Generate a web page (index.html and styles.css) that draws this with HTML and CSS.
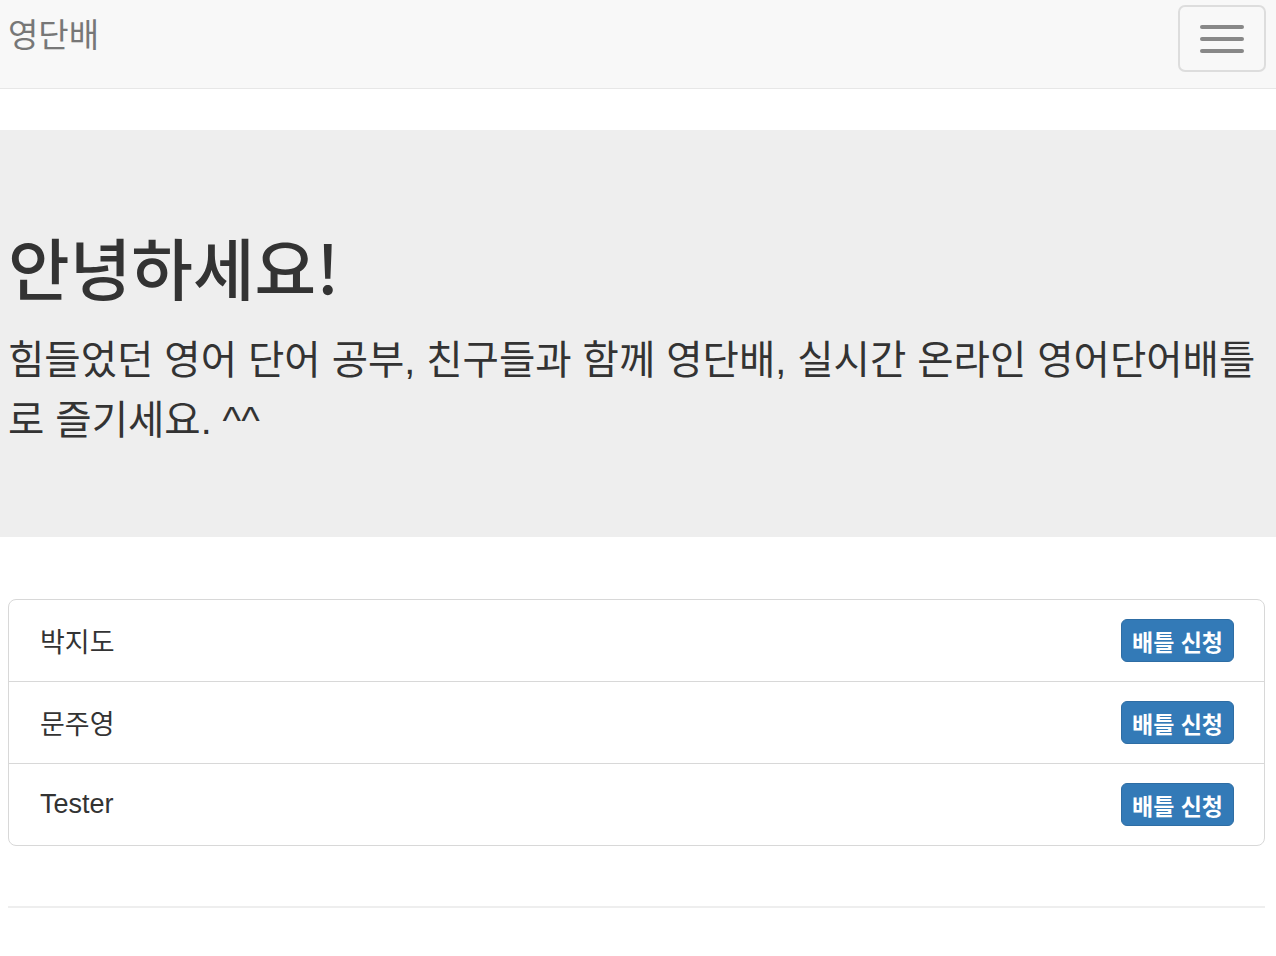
FILE: index.html
```html
<!DOCTYPE html>
<html lang="ko">
<head>
<meta charset="utf-8">
<title>영단배</title>
<link rel="stylesheet" href="styles.css">
</head>
<body>
<nav class="navbar">
  <a class="brand" href="#">영단배</a>
  <button class="toggle" type="button" aria-label="메뉴">
    <span class="bar"></span>
    <span class="bar"></span>
    <span class="bar"></span>
  </button>
</nav>

<section class="jumbotron">
  <h1 class="title">안녕하세요!</h1>
  <p class="lead">힘들었던 영어 단어 공부, 친구들과 함께 영단배, 실시간 온라인 영어단어배틀로 즐기세요. ^^</p>
</section>

<main class="content">
  <ul class="list">
    <li class="item"><span class="name">박지도</span><button class="btn" type="button">배틀 신청</button></li>
    <li class="item"><span class="name">문주영</span><button class="btn" type="button">배틀 신청</button></li>
    <li class="item"><span class="name">Tester</span><button class="btn" type="button">배틀 신청</button></li>
  </ul>
  <hr class="rule">
</main>
</body>
</html>
```

FILE: styles.css
```css
html, body {
  margin: 0;
  padding: 0;
  background: #fff;
}

body {
  font-family: "Liberation Sans", "Noto Sans CJK KR", sans-serif;
  color: #333;
}

.navbar {
  display: flex;
  justify-content: space-between;
  align-items: flex-start;
  height: 88px;
  background: #f8f8f8;
  border-bottom: 1px solid #e7e7e7;
}

.brand {
  display: block;
  padding: 16px 0 0 8px;
  font-size: 33px;
  line-height: 40px;
  color: #777;
  text-decoration: none;
}

.toggle {
  box-sizing: border-box;
  display: flex;
  flex-direction: column;
  align-items: center;
  justify-content: center;
  gap: 8px;
  width: 88px;
  height: 67px;
  margin: 5px 10px 0 0;
  padding: 0;
  background: transparent;
  border: 2px solid #ddd;
  border-radius: 7px;
}

.bar {
  display: block;
  width: 44px;
  height: 4px;
  border-radius: 2px;
  background: #888;
}

.jumbotron {
  margin-top: 41px;
  padding: 101px 4px 87px 8px;
  background: #eee;
}

.title {
  margin: 0;
  font-family: "Noto Sans CJK KR", sans-serif;
  font-size: 67px;
  line-height: 70px;
  font-weight: 500;
  color: #333;
}

.lead {
  margin: 29px 0 0;
  font-size: 39.5px;
  line-height: 60px;
  font-weight: 400;
  color: #333;
}

.content {
  padding: 62px 11px 0 8px;
}

.list {
  margin: 0;
  padding: 0;
  list-style: none;
  border: 1px solid #d8d8d8;
  border-radius: 8px;
}

.item {
  display: flex;
  justify-content: space-between;
  align-items: center;
  height: 81px;
  padding: 0 30px 0 31px;
  border-top: 1px solid #d8d8d8;
}

.item:first-child {
  border-top: none;
}

.name {
  font-size: 27px;
  color: #333;
}

.btn {
  box-sizing: border-box;
  height: 43px;
  padding: 0 10px;
  font-family: "Liberation Sans", "Noto Sans CJK KR", sans-serif;
  font-size: 23px;
  font-weight: bold;
  color: #fff;
  background: #337ab7;
  border: 1px solid #2e6da4;
  border-radius: 6px;
}

.rule {
  margin: 60px 0 0;
  height: 0;
  border: none;
  border-top: 2px solid #eee;
}
```
